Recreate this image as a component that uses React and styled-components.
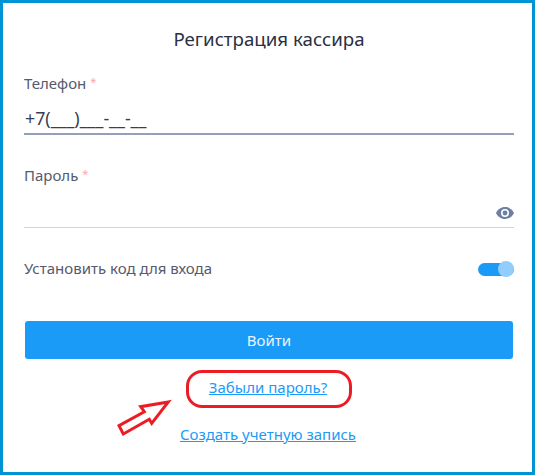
import React from "react";
import styled, { createGlobalStyle } from "styled-components";

const Global = createGlobalStyle`
  html, body {
    margin: 0;
    padding: 0;
    background: #fff;
  }
  * {
    box-sizing: border-box;
  }
`;

const Frame = styled.div`
  position: relative;
  width: 535px;
  height: 475px;
  border: 3px solid #0094d4;
  background: #fff;
  padding: 21px 18px 0 21px;
  font-family: "Noto Sans", "Open Sans", sans-serif;
  color: #3c4155;
`;

const Title = styled.h1`
  margin: 0 0 18px;
  height: 30px;
  font-size: 18.7px;
  line-height: 30px;
  font-weight: 400;
  text-align: center;
  color: #2b3044;
`;

const Field = styled.div`
  height: ${(p) => p.$height}px;
  border-bottom: ${(p) => (p.$active ? "2px solid #94a0ba" : "1px solid #d3d5dc")};
  position: relative;
`;

const Label = styled.label`
  display: block;
  font-size: 15px;
  line-height: 20px;
  color: #555a6c;
`;

const Star = styled.span`
  color: #ffa4a8;
  font-size: 11px;
  vertical-align: 3px;
  margin-left: 4px;
`;

const PhoneValue = styled.div`
  margin-top: 13px;
  padding-left: 1px;
  font-size: 17.8px;
  line-height: 24px;
  color: #383d50;
`;

const EyeButton = styled.span`
  position: absolute;
  right: 0;
  bottom: 8px;
  display: flex;
  color: #6d7fa3;
`;

const SpacedField = styled.div`
  margin-top: 29px;
`;

const ToggleRow = styled.div`
  display: flex;
  justify-content: space-between;
  align-items: center;
  height: 20px;
  margin-top: 30px;
  font-size: 15px;
  color: #555a6c;
`;

const Toggle = styled.span`
  position: relative;
  width: 36px;
  height: 13px;
  margin-top: 2px;
  border-radius: 7px;
  background: #1a9bf8;
`;

const Knob = styled.span`
  position: absolute;
  right: 0;
  top: -2px;
  width: 16px;
  height: 16px;
  border-radius: 50%;
  background: #91cdfd;
`;

const Submit = styled.button`
  display: block;
  width: 488px;
  height: 38px;
  margin: 43px 0 0 1px;
  border: 0;
  border-radius: 3px;
  background: #1a9bf8;
  color: #e9f5ff;
  font-family: inherit;
  font-size: 15px;
`;

const Links = styled.div`
  display: flex;
  flex-direction: column;
  align-items: center;
  gap: 27px;
  margin-top: 18px;
  padding-right: 2px;
`;

const LinkText = styled.a`
  font-size: 15px;
  line-height: 20px;
  color: #1a9bf8;
  text-decoration: underline;
`;

const Highlight = styled.div`
  position: absolute;
  left: 183px;
  top: 367px;
  width: 166px;
  height: 38px;
  border: 3px solid #ec1c24;
  border-radius: 16px;
`;

const Arrow = styled.svg`
  position: absolute;
  left: 110px;
  top: 394px;
`;

export default function App() {
  return (
    <>
      <Global />
      <Frame>
        <Title>Регистрация кассира</Title>
        <Field $height={63} $active>
          <Label>
            Телефон<Star>*</Star>
          </Label>
          <PhoneValue>+7(___)___-__-__</PhoneValue>
        </Field>
        <SpacedField>
          <Field $height={64}>
            <Label>
              Пароль<Star>*</Star>
            </Label>
            <EyeButton>
              <svg width="18" height="12" viewBox="0 0 18 12">
                <path
                  fill="currentColor"
                  fillRule="evenodd"
                  d="M9 0C5 0 1.6 2.500 0 6c1.600 3.500 5 6 9 6s7.400-2.500 9-6c-1.600-3.500-5-6-9-6zm0 10a4 4 0 1 1 0-8 4 4 0 0 1 0 8zm0-6.400a2.400 2.400 0 1 0 0 4.800 2.400 2.400 0 0 0 0-4.800z"
                />
              </svg>
            </EyeButton>
          </Field>
        </SpacedField>
        <ToggleRow>
          <span>Установить код для входа</span>
          <Toggle>
            <Knob />
          </Toggle>
        </ToggleRow>
        <Submit>Войти</Submit>
        <Links>
          <LinkText href="#">Забыли пароль?</LinkText>
          <LinkText href="#">Создать учетную запись</LinkText>
        </Links>
        <Highlight />
        <Arrow width="60" height="44" viewBox="0 0 60 44">
          <path
            d="M55.300 5 27.700 9.700 31.300 14.700 6 28.700 10.300 37 36.300 22.300 38.700 26.300z"
            fill="#fff"
            stroke="#ec1c24"
            strokeWidth="3"
          />
        </Arrow>
      </Frame>
    </>
  );
}
